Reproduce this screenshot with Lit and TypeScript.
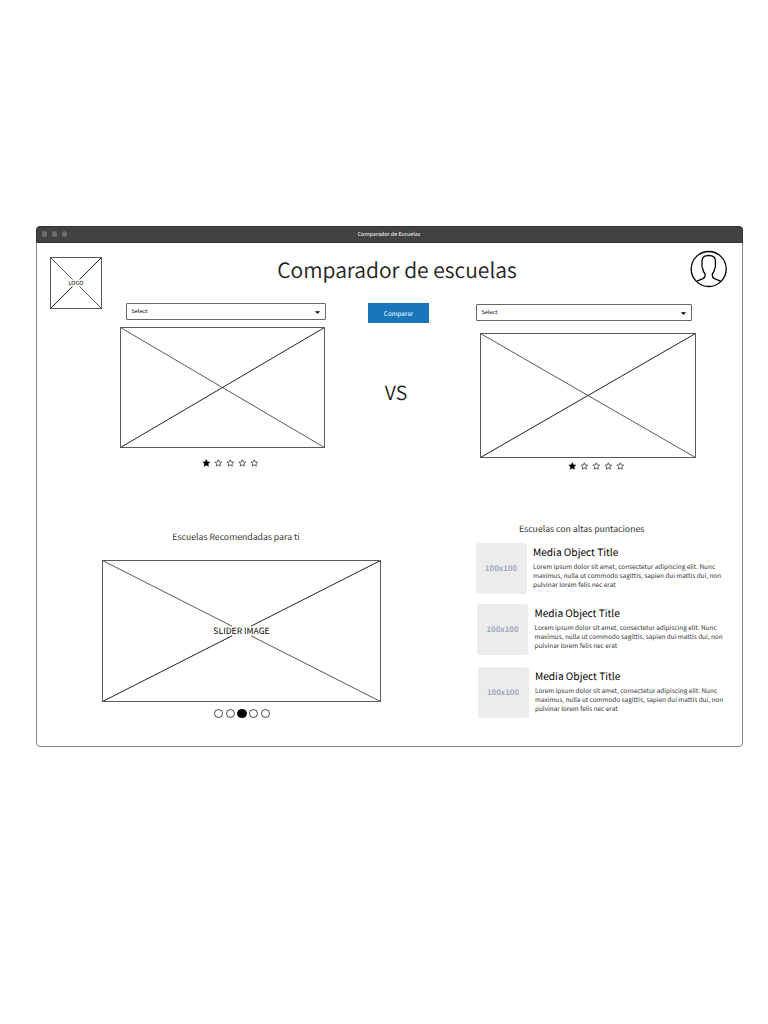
import { LitElement, html, css, svg } from "lit";
import { customElement, property } from "lit/decorators.js";

@customElement("wire-image")
class WireImage extends LitElement {
  @property({ type: Number }) w = 100;
  @property({ type: Number }) h = 100;
  @property() label = "";
  @property({ type: Number }) gapx = 0;
  @property({ type: Number }) gapy = 0;
  static styles = css`
    :host { display: grid; }
    svg { grid-area: 1 / 1; display: block; }
    .label { grid-area: 1 / 1; place-self: center; color: #000; white-space: nowrap; }
  `;
  render() {
    const { w, h, gapx, gapy } = this;
    return html`
      <svg width=${w} height=${h} viewBox="0 0 ${w} ${h}" fill="none" stroke="#222">
        <path d="M.5 .5L${w - 0.5} ${h - 0.5}" stroke-width=".9" stroke="#444" />
        <path d="M${w - 0.5} .5L.5 ${h - 0.5}" stroke-width="1" stroke="#222" />
        ${gapx ? svg`<rect x=${(w - gapx) / 2} y=${(h - gapy) / 2} width=${gapx} height=${gapy} fill="#fff" stroke="none" />` : ""}
        <rect x=".5" y=".5" width=${w - 1} height=${h - 1} stroke="#5a5a5a" />
      </svg>
      ${this.label ? html`<span class="label">${this.label}</span>` : ""}
    `;
  }
}

@customElement("star-rating")
class StarRating extends LitElement {
  @property({ type: Number }) value = 1;
  static styles = css`
    :host { display: flex; gap: 4px; }
    svg { display: block; }
  `;
  render() {
    return [0, 1, 2, 3, 4].map(
      (i) => html`<svg width="8" height="8" viewBox="-0.3 0 8 8">
        <path d="M4 .7L5 2.95L7.4 3.2L5.6 4.8L6.1 7.2L4 5.95L1.9 7.2L2.4 4.8L.6 3.2L3 2.95Z"
          fill=${i < this.value ? "#000" : "#fff"} stroke=${i < this.value ? "#000" : "#222"}
          stroke-width=".7" stroke-linejoin="round" />
      </svg>`
    );
  }
}

@customElement("select-box")
class SelectBox extends LitElement {
  static styles = css`
    :host { display: flex; box-sizing: border-box; align-items: center; justify-content: space-between;
      border: 1px solid #666; border-radius: 1px; padding: 0 5px 0 4.5px; color: #000; background: #fff; }
    .text { font-size: 5.5px; line-height: 8px; margin-top: -1px; }
    svg { display: block; margin-top: 1px; }
  `;
  render() {
    return html`<span class="text">Select</span>
      <svg width="5" height="3" viewBox="0 0 5 3"><path d="M0 .2H5L3 2.4Q2.5 2.8 2 2.4Z" fill="#000" /></svg>`;
  }
}

@customElement("media-object")
class MediaObject extends LitElement {
  static styles = css`
    :host { display: flex; gap: 6.5px; height: 51px; }
    .thumb { width: 51px; height: 51px; flex: none; border-radius: 3px; background: #ececec; display: grid;
      place-items: center; color: #a0a8c0; font-weight: 700; font-size: 7.8px; line-height: 10px; padding-top: 1px;
      box-sizing: border-box; }
    .title { font-size: 10.15px; line-height: 14px; margin-top: 2px; color: #000; white-space: nowrap; }
    .body { font-size: 6.4px; line-height: 9.25px; margin-top: 2.9px; color: #333; white-space: nowrap; }
  `;
  render() {
    return html`<div class="thumb">100x100</div>
      <div>
        <div class="title">Media Object Title</div>
        <div class="body">
          Lorem ipsum dolor sit amet, consectetur adipiscing elit. Nunc<br />maximus, nulla ut commodo
          sagittis, sapien dui mattis dui, non<br />pulvinar lorem felis nec erat
        </div>
      </div>`;
  }
}

@customElement("app-root")
class AppRoot extends LitElement {
  static styles = css`
    :host { display: block; box-sizing: border-box; height: 1024px; padding: 226px 25px 0 36px; background: #fff;
      font-family: "Noto Sans CJK SC", "Noto Sans", sans-serif; color: #222; overflow: hidden;
      text-rendering: geometricPrecision; }
    .window { box-sizing: border-box; width: 707px; height: 521px; border: 1px solid #888; border-radius: 4px; }
    .bar { box-sizing: border-box; height: 17px; margin: -1px -1px 0; border: 1px solid #333; border-radius: 4px 4px 0 0;
      background: #424242; display: grid; grid-template-columns: 1fr auto 1fr; align-items: center; }
    .lights { display: flex; gap: 4.8px; padding-left: 4.5px; margin-top: -1px; }
    .light { width: 5.4px; height: 5.4px; border-radius: 50%; background: #6d6d6d; }
    .caption { color: #fff; font-size: 5.45px; line-height: 8px; margin: -1px 1px 0 0; }
    .header { display: flex; height: 60px; justify-content: space-between; padding: 0 14px 0 13px; }
    .logo { margin-top: 14px; font-size: 5.6px; line-height: 8px; height: 52px; }
    .heading { margin: 10px 0 0 1.5px; font-size: 21px; line-height: 34px; font-weight: 350; height: 34px; }
    .avatar { margin: 7px -0.5px 0 0; display: block; }
    .compare { display: flex; height: 210px; }
    .left { width: 206px; margin-left: 83px; display: flex; flex-direction: column; }
    .left select-box { width: 200px; height: 17px; margin-left: 6px; }
    .left wire-image { margin-top: 7px; }
    .left star-rating { margin: 11px 0 0 82px; }
    .middle { width: 61px; margin: 0 0 0 42px; display: flex; flex-direction: column; align-items: center; }
    .button { width: 61px; height: 20px; background: #1976bb; color: #fff; font-size: 6.3px; line-height: 21px; text-align: center; }
    .vs { margin-top: 54px; font-size: 19.5px; line-height: 30px; margin-right: 5px; font-weight: 350; }
    .right { width: 221px; margin-left: 47px; display: flex; flex-direction: column; }
    .right select-box { width: 216px; height: 17px; margin-top: 1px; }
    .right wire-image { margin: 12px 0 0 4px; }
    .right star-rating { margin: 4px 0 0 92px; }
    .bottom { display: flex; }
    .rec { width: 279px; margin-left: 65px; display: flex; flex-direction: column; align-items: center; }
    .subtitle { font-size: 8.7px; line-height: 14px; color: #333; white-space: nowrap; }
    .rec .subtitle { margin: 17px 11px 0 0; }
    .slider { margin-top: 16px; font-size: 8.6px; line-height: 12px; }
    .dots { display: flex; gap: 2.5px; margin: 7px 0 0 1px; }
    .dot { box-sizing: border-box; width: 9.2px; height: 9.2px; border: 1px solid #444; border-radius: 50%; }
    .dot.on { background: #000; border-color: #000; }
    .top { margin-left: 94.5px; width: 260px; display: flex; flex-direction: column; }
    .top .subtitle { margin: 9px 0 0 43.5px; height: 14px; }
    .m1 { margin-top: 7px; }
    .m2 { margin: 10px 0 0 1.5px; }
    .m3 { margin: 12px 0 0 2px; }
  `;
  render() {
    return html`<div class="window">
      <div class="bar">
        <div class="lights"><i class="light"></i><i class="light"></i><i class="light"></i></div>
        <div class="caption">Comparador de Escuelas</div>
      </div>
      <div class="header">
        <wire-image class="logo" w="52" h="52" label="LOGO" gapx="11" gapy="7"></wire-image>
        <div class="heading">Comparador de escuelas</div>
        <svg class="avatar" width="38" height="38" viewBox="0.3 0 38 38" fill="none" stroke="#000" stroke-width="1.3">
          <circle cx="19" cy="19" r="17.5" />
          <path d="M6.8 31.3L9 30.3L13.2 28.6Q15.6 27.5 15.4 25.3V24Q13.4 21.8 12.9 18.3Q11.9 17.6 12.3 15V10.5Q12.6 6.9 16 5.9Q19 5.1 22 5.9Q25.4 6.9 25.7 10.5V15Q26.1 17.6 25.1 18.3Q24.6 21.8 22.6 24V25.3Q22.4 27.5 24.8 28.6L29 30.3L31.2 31.3" />
        </svg>
      </div>
      <div class="compare">
        <div class="left">
          <select-box></select-box>
          <wire-image w="205" h="121"></wire-image>
          <star-rating value="1"></star-rating>
        </div>
        <div class="middle">
          <div class="button">Comparar</div>
          <div class="vs">VS</div>
        </div>
        <div class="right">
          <select-box></select-box>
          <wire-image w="216" h="125"></wire-image>
          <star-rating value="1"></star-rating>
        </div>
      </div>
      <div class="bottom">
        <div class="rec">
          <div class="subtitle">Escuelas Recomendadas para ti</div>
          <wire-image class="slider" w="279" h="142" label="SLIDER IMAGE" gapx="19" gapy="10"></wire-image>
          <div class="dots">
            ${[0, 1, 2, 3, 4].map((i) => html`<i class="dot ${i === 2 ? "on" : ""}"></i>`)}
          </div>
        </div>
        <div class="top">
          <div class="subtitle">Escuelas con altas puntaciones</div>
          <media-object class="m1"></media-object>
          <media-object class="m2"></media-object>
          <media-object class="m3"></media-object>
        </div>
      </div>
    </div>`;
  }
}
